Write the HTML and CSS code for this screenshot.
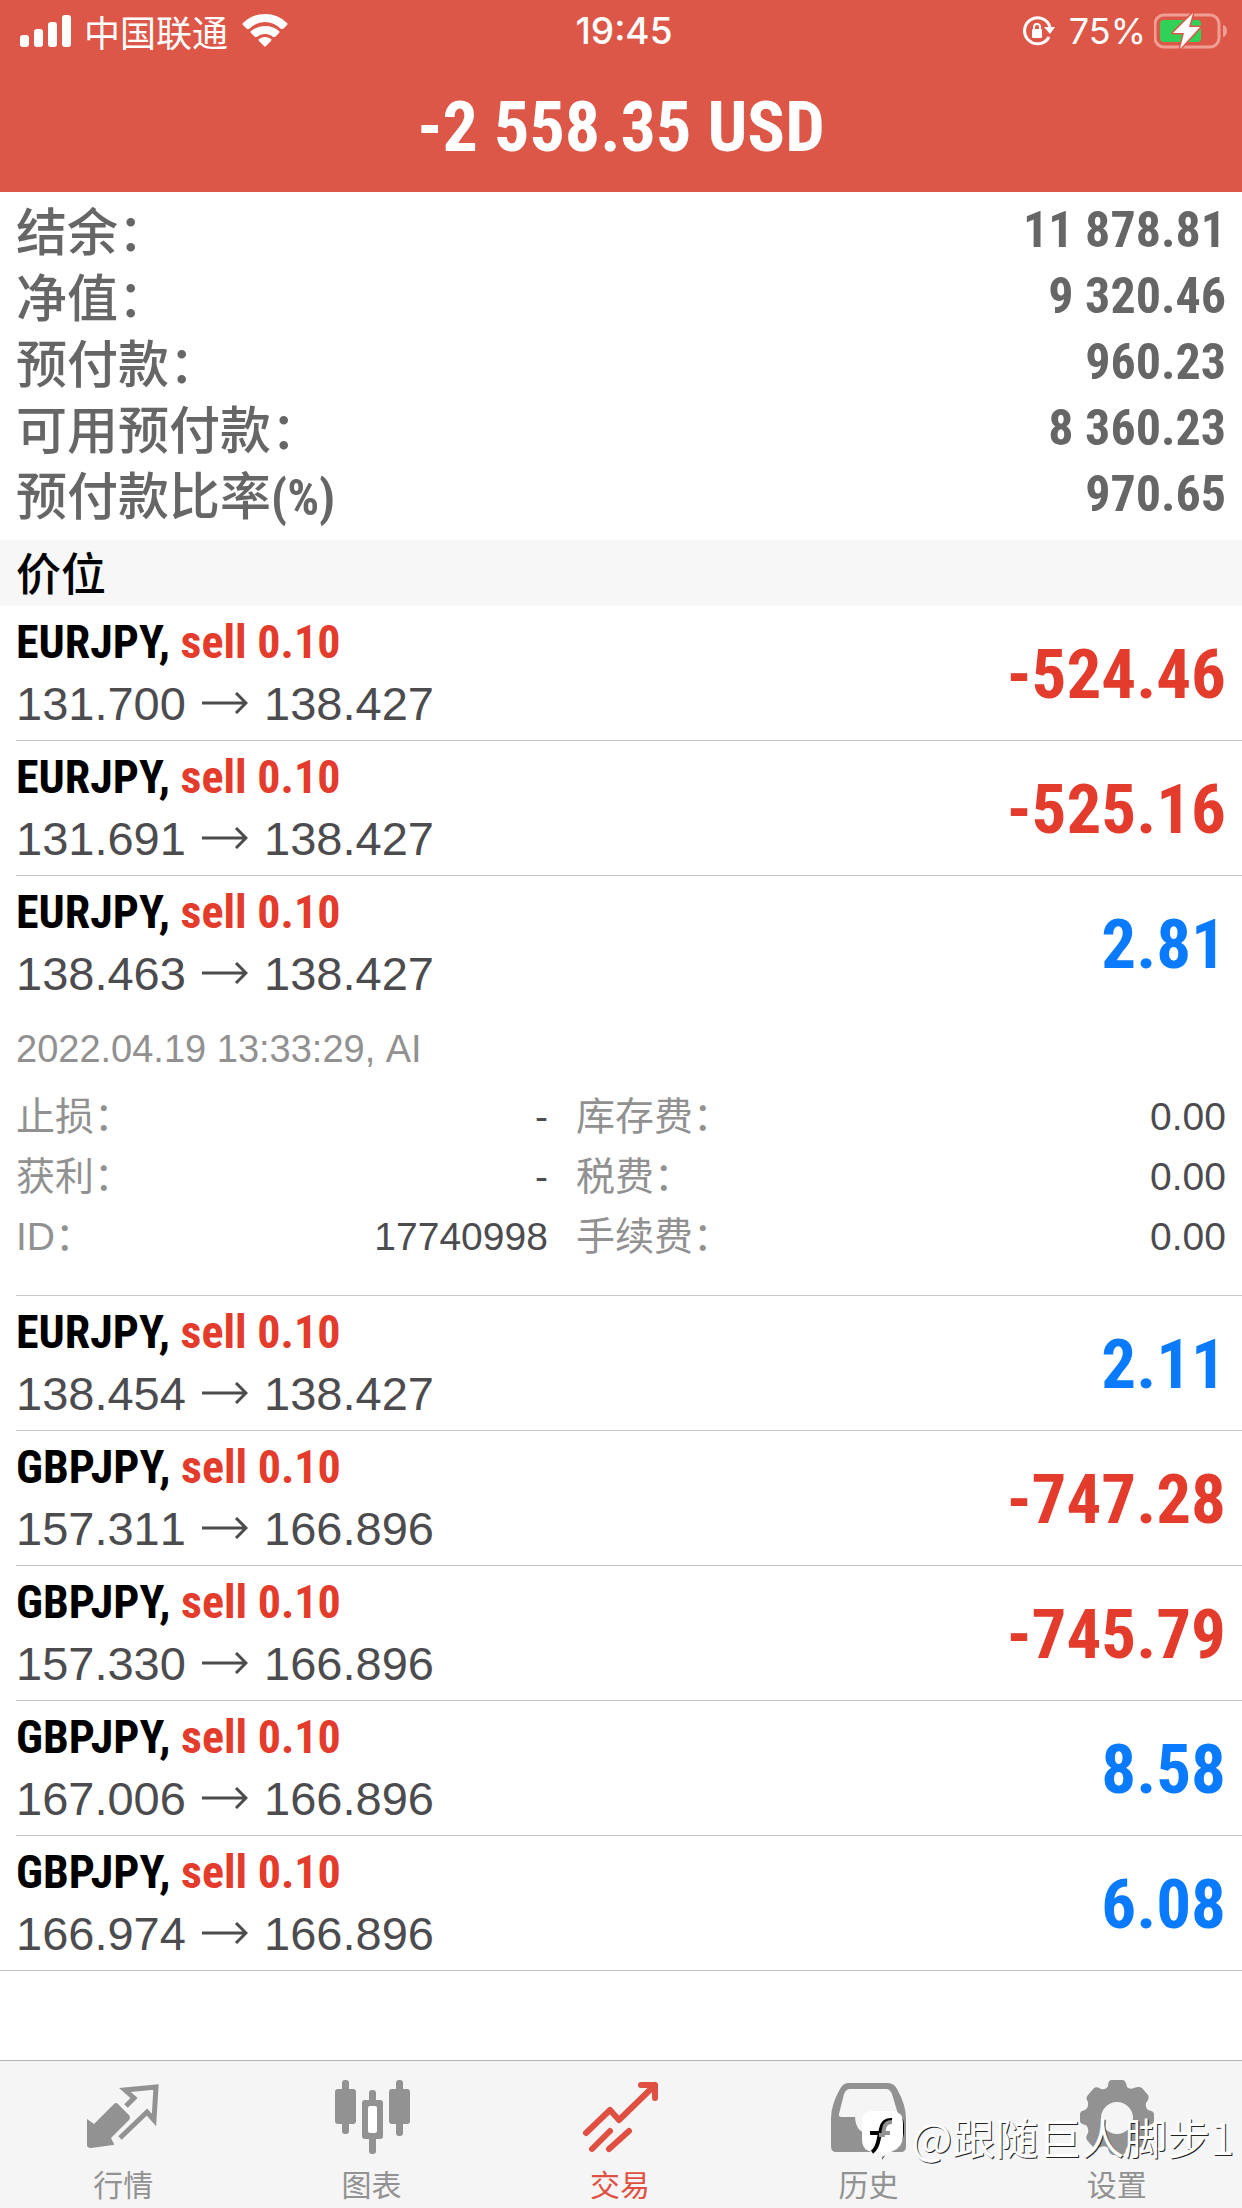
FILE: index.html
```html
<!DOCTYPE html>
<html lang="zh-CN">
<head>
<meta charset="utf-8">
<meta name="viewport" content="width=device-width, initial-scale=1">
<title>交易</title>
<link rel="stylesheet" href="styles.css">
</head>
<body>
<header class="header">
  <div class="status">
    <div class="status-left">
      <svg class="signal" width="52" height="34" viewBox="0 0 52 34" fill="#fff" aria-hidden="true"><rect x="0" y="21" width="9" height="12" rx="3"/><rect x="14" y="15" width="9" height="18" rx="3"/><rect x="28" y="8" width="9" height="25" rx="3"/><rect x="42" y="1" width="9" height="32" rx="3"/></svg>
      <span class="carrier">中国联通</span>
      <svg width="46" height="34" viewBox="0 0 46 34" fill="#fff" aria-hidden="true"><path d="M1 9Q10 0 23 0T45 9Q46 10 45 11L41 15Q40 15 39 15Q32 8 23 8T7 15Q6 15 5 15L1 11Q0 10 1 9Z"/><path d="M9 17Q15 12 23 12T37 17Q38 18 37 19L33 23Q32 23 31 23Q28 20 23 20T15 23Q14 23 13 23L9 19Q8 18 9 17Z"/><path d="M17 25Q20 23 23 23T29 25Q30 26 29 27L24 32Q23 33 22 32L17 27Q16 26 17 25Z"/></svg>
    </div>
    <time class="clock">19:45</time>
    <div class="status-right">
      <svg width="32" height="32" viewBox="0 0 32 32" aria-hidden="true"><path d="M26 22A13 13 0 1 1 27 12" fill="none" stroke="#fff" stroke-width="3"/><path d="M21 12H32L27 19Z" fill="#fff"/><rect x="9" y="14" width="10" height="9" rx="1" fill="#fff"/><path d="M11 15V12A3 3 0 0 1 17 12V15" fill="none" stroke="#fff" stroke-width="2"/></svg>
      <span class="percent">75%</span>
      <svg width="74" height="36" viewBox="0 0 74 36" aria-hidden="true"><rect x="1" y="2" width="64" height="32" rx="9" fill="none" stroke="#f09d94" stroke-width="3"/><path d="M69 12Q73 13 73 18T69 24Z" fill="#f09d94"/><rect x="6" y="7" width="41" height="22" rx="4" fill="#31d158"/><path d="M39 0 19 20H30L26 36 46 14H35Z" fill="#fff" stroke="#dd5748" stroke-width="3" paint-order="stroke" stroke-linejoin="round"/></svg>
    </div>
  </div>
  <h1 class="total">-2 558.35 USD</h1>
</header>
<main>
  <dl class="account">
    <div class="account-row"><dt>结余：</dt><dd>11 878.81</dd></div>
    <div class="account-row"><dt>净值：</dt><dd>9 320.46</dd></div>
    <div class="account-row"><dt>预付款：</dt><dd>960.23</dd></div>
    <div class="account-row"><dt>可用预付款：</dt><dd>8 360.23</dd></div>
    <div class="account-row"><dt>预付款比率<span class="unit">(%)</span></dt><dd>970.65</dd></div>
  </dl>
  <h2 class="section">价位</h2>
  <ul class="positions">
    <li class="position"><div class="summary"><div><p class="symbol">EURJPY, <span class="side">sell 0.10</span></p><p class="prices">131.700 <svg class="arrow" viewBox="0 0 46 22"><path d="M0 11H44M34 1 44 11 34 21"/></svg> 138.427</p></div><p class="profit loss">-524.46</p></div></li>
    <li class="position"><div class="summary"><div><p class="symbol">EURJPY, <span class="side">sell 0.10</span></p><p class="prices">131.691 <svg class="arrow" viewBox="0 0 46 22"><path d="M0 11H44M34 1 44 11 34 21"/></svg> 138.427</p></div><p class="profit loss">-525.16</p></div></li>
    <li class="position"><div class="summary"><div><p class="symbol">EURJPY, <span class="side">sell 0.10</span></p><p class="prices">138.463 <svg class="arrow" viewBox="0 0 46 22"><path d="M0 11H44M34 1 44 11 34 21"/></svg> 138.427</p></div><p class="profit">2.81</p></div>
      <div class="details">
        <p class="opened">2022.04.19 13:33:29, AI</p>
        <dl class="detail-grid">
          <div class="detail"><dt>止损：</dt><dd>-</dd></div>
          <div class="detail"><dt>库存费：</dt><dd>0.00</dd></div>
          <div class="detail"><dt>获利：</dt><dd>-</dd></div>
          <div class="detail"><dt>税费：</dt><dd>0.00</dd></div>
          <div class="detail"><dt>ID：</dt><dd>17740998</dd></div>
          <div class="detail"><dt>手续费：</dt><dd>0.00</dd></div>
        </dl>
      </div>
    </li>
    <li class="position"><div class="summary"><div><p class="symbol">EURJPY, <span class="side">sell 0.10</span></p><p class="prices">138.454 <svg class="arrow" viewBox="0 0 46 22"><path d="M0 11H44M34 1 44 11 34 21"/></svg> 138.427</p></div><p class="profit">2.11</p></div></li>
    <li class="position"><div class="summary"><div><p class="symbol">GBPJPY, <span class="side">sell 0.10</span></p><p class="prices">157.311 <svg class="arrow" viewBox="0 0 46 22"><path d="M0 11H44M34 1 44 11 34 21"/></svg> 166.896</p></div><p class="profit loss">-747.28</p></div></li>
    <li class="position"><div class="summary"><div><p class="symbol">GBPJPY, <span class="side">sell 0.10</span></p><p class="prices">157.330 <svg class="arrow" viewBox="0 0 46 22"><path d="M0 11H44M34 1 44 11 34 21"/></svg> 166.896</p></div><p class="profit loss">-745.79</p></div></li>
    <li class="position"><div class="summary"><div><p class="symbol">GBPJPY, <span class="side">sell 0.10</span></p><p class="prices">167.006 <svg class="arrow" viewBox="0 0 46 22"><path d="M0 11H44M34 1 44 11 34 21"/></svg> 166.896</p></div><p class="profit">8.58</p></div></li>
    <li class="position"><div class="summary"><div><p class="symbol">GBPJPY, <span class="side">sell 0.10</span></p><p class="prices">166.974 <svg class="arrow" viewBox="0 0 46 22"><path d="M0 11H44M34 1 44 11 34 21"/></svg> 166.896</p></div><p class="profit">6.08</p></div></li>
  </ul>
</main>
<nav class="tabs">
  <a class="tab" href="#quotes">
    <svg class="icon" viewBox="0 0 80 80"><path fill="currentColor" d="M4 42 11 47 31 27Q33 25 35 27L46 38Q48 41 46 43L28 61 31 67Q32 68 30 68L8 71Q4 71 4 68Z"/><path fill="none" stroke="currentColor" stroke-width="5" d="M43 29 51 21 42 13 73 10 71 43 64 35 37 61"/></svg>
    <span>行情</span></a>
  <a class="tab" href="#charts">
    <svg class="icon" viewBox="0 0 80 80" fill="currentColor"><rect x="10" y="3" width="7" height="54" rx="3"/><rect x="3" y="12" width="21" height="35" rx="3"/><rect x="64" y="3" width="7" height="56" rx="3"/><rect x="57" y="12" width="21" height="35" rx="3"/><rect x="37" y="13" width="7" height="64" rx="3"/><rect x="30" y="23" width="21" height="39" rx="3"/><rect x="36" y="29" width="9" height="27" rx="2" fill="#fff"/></svg>
    <span>图表</span></a>
  <a class="tab active" href="#trade" aria-current="page">
    <svg class="icon" viewBox="0 0 80 80" fill="none" stroke="currentColor" stroke-width="6" stroke-linecap="round"><path d="M6 56 30 33 39 43 75 8M61 8H75V21M12 72 30 54M29 72 49 54" stroke-linejoin="round"/></svg>
    <span>交易</span></a>
  <a class="tab" href="#history">
    <svg class="icon" viewBox="0 0 80 80"><path fill="currentColor" fill-rule="evenodd" d="M20 6H60Q66 6 69 12Q78 28 78 41V69Q78 75 73 75H8Q3 75 3 69V41Q3 28 12 12Q15 6 20 6ZM22 12Q18 12 16 17L11 37Q10 40 14 40H27Q28 56 40 56T53 40H67Q71 40 70 37L64 17Q62 12 58 12Z"/></svg>
    <span>历史</span></a>
  <a class="tab" href="#settings">
    <svg class="icon" viewBox="0 0 80 80"><path fill="currentColor" fill-rule="evenodd" d="M34 3H46Q49 4 50 10Q53 13 57 11Q62 9 65 11L71 18Q73 21 69 26Q68 30 71 33Q77 34 77 37V44Q77 47 71 48Q68 52 69 55Q73 60 71 63L64 70Q61 72 56 69Q51 68 49 72Q48 78 45 78H36Q32 77 31 71Q28 68 24 70Q19 72 16 70L10 63Q8 60 11 56Q12 51 9 48Q3 47 3 44V37Q3 34 8 33Q12 30 11 25Q8 21 11 18L17 11Q20 9 24 12Q29 13 31 9Q31 4 34 3ZM40 25A16 16 0 1 0 40 57A16 16 0 1 0 40 25Z"/></svg>
    <span>设置</span></a>
  <div class="watermark">
    <svg width="44" height="50" viewBox="0 0 44 50"><path d="M21 49Q25 43 25 41Q41 40 43 22V14Q43 3 31 3" fill="#000"/><path d="M10 0H32Q42 1 42 12V25Q42 36 32 40Q26 42 22 46Q22 43 20 41H12Q1 40 1 28V12Q1 1 10 0Z" fill="#fff"/><path d="M11 41Q16 38 18 27L20 18Q22 8 31 9M9 22H28" fill="none" stroke="#000" stroke-width="4"/><path d="M18 24H22L23 18Q24 11 31 11M21 22H29" fill="none" stroke="#929292" stroke-width="4"/></svg>
    <span>@跟随巨人脚步1</span>
  </div>
</nav>
</body>
</html>
```
FILE: styles.css
```css
* { box-sizing: border-box; }
body, h1, h2, p, dl, dd, ul { margin: 0; padding: 0; }
body {
  min-height: 100vh;
  display: flex;
  flex-direction: column;
  background: #fff;
  color: #000;
  font-family: "Liberation Sans", "Noto Sans CJK SC", sans-serif;
  font-kerning: none;
}
.header { background: #dd5748; color: #fff; height: 192px; }
.status {
  height: 62px;
  padding: 0 14px 0 20px;
  display: grid;
  grid-template-columns: 1fr auto 1fr;
  align-items: center;
}
.status-left, .status-right { display: flex; align-items: center; }
.status-right { justify-content: flex-end; }
.carrier { margin: 0 14px 0 12px; font: 400 36px/60px "Noto Sans CJK SC", sans-serif; }
.clock { font: 500 37px/60px Inter, sans-serif; }
.percent { margin: 0 8px 0 14px; font: 400 36px/60px Inter, sans-serif; }
.total {
  font: 700 70px/130px "Roboto Condensed", "Liberation Sans", sans-serif;
  text-align: center;
}
.account { padding: 4px 16px 14px; color: #666; }
.account-row { display: flex; justify-content: space-between; align-items: flex-start; height: 66px; }
.account dt { font: 500 51px/66px "Noto Sans CJK SC", sans-serif; }
.account dd { font: 700 50px/68px "Roboto Condensed", "Liberation Sans", sans-serif; }
.unit { font: 700 50px/66px "Roboto Condensed", Roboto, sans-serif; }
.section {
  background: #f7f7f7;
  padding: 0 16px 2px;
  font: 500 45px/64px "Noto Sans CJK SC", sans-serif;
}
.positions { list-style: none; border-bottom: 1px solid #c8c8c8; }
.position { margin-left: 16px; border-bottom: 1px solid #c8c8c8; }
.position:last-child { border-bottom: 0; }
.summary { display: flex; justify-content: space-between; align-items: center; padding: 5px 16px 5px 0; }
.symbol { font: 700 46px/62px "Roboto Condensed", Roboto, sans-serif; font-kerning: normal; }
.side { color: #e33b2c; }
.prices { font-size: 47px; line-height: 62px; color: #4c4c4f; }
.arrow { width: 46px; height: 22px; margin: 0 3px; vertical-align: 6px; fill: none; stroke: currentColor; stroke-width: 3; }
.profit { padding-top: 4px; font: 700 69px/80px "Roboto Condensed", "Liberation Sans", sans-serif; color: #0a7aff; }
.profit.loss { color: #e33b2c; }
.details { padding: 9px 16px 28px 0; font-size: 39px; line-height: 60px; color: #919191; }
.opened { margin-bottom: 8px; font-size: 38px; }
.detail-grid { display: grid; grid-template-columns: 45fr 55fr; column-gap: 28px; }
.detail { display: flex; justify-content: space-between; height: 60px; }
.detail dd { color: #4c4c4f; }
.tabs {
  position: relative;
  margin-top: auto;
  height: 148px;
  display: grid;
  grid-template-columns: repeat(5, 1fr);
  background: #f5f5f5;
  border-top: 1px solid #b2b2b2;
}
.tab {
  display: flex;
  flex-direction: column;
  align-items: center;
  gap: 4px;
  padding-top: 16px;
  padding-right: 2px;
  color: #929292;
  text-decoration: none;
  font: 400 30px/44px "Noto Sans CJK SC", sans-serif;
}
.active { color: #e05042; }
.icon { width: 80px; height: 80px; }
.watermark {
  position: absolute;
  right: 8px;
  bottom: 42px;
  display: flex;
  align-items: center;
  gap: 6px;
  color: #fff;
  font: 400 43px/60px "Noto Sans CJK SC", sans-serif;
  text-shadow: 1px 1px 0 #222;
}
```
